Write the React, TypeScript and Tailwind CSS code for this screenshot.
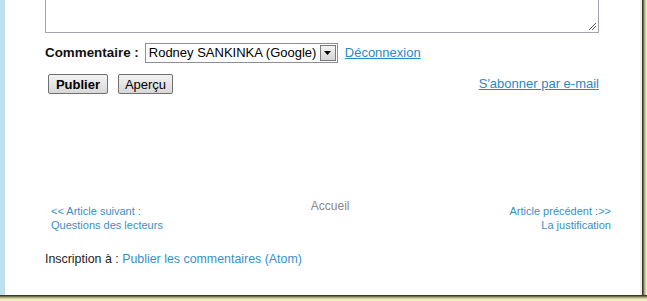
import React from "react";

export default function App() {
  const font = { fontFamily: '"Liberation Sans", Arial, sans-serif' };
  return (
    <div className="w-[647px] h-[301px] overflow-hidden flex flex-col bg-white" style={font}>
      <div className="flex flex-1 min-h-0">
        <div className="w-[5px] bg-[#bde0ec]" />
        <div className="flex-1 bg-white flex flex-col pl-[40px]">
          {/* textarea bottom */}
          <div className="relative w-[554px] h-[33px] border-x border-b border-[#a4a4ac] bg-white">
            <svg className="absolute right-[1px] bottom-[1px]" width="10" height="10" viewBox="0 0 10 10">
              <g fill="#555">
                <rect x="8" y="2" width="1" height="1" />
                <rect x="7" y="3" width="1" height="1" />
                <rect x="6" y="4" width="1" height="1" />
                <rect x="5" y="5" width="1" height="1" />
                <rect x="4" y="6" width="1" height="1" />
                <rect x="3" y="7" width="1" height="1" />
                <rect x="2" y="8" width="1" height="1" />
                <rect x="8" y="5" width="1" height="1" />
                <rect x="7" y="6" width="1" height="1" />
                <rect x="6" y="7" width="1" height="1" />
                <rect x="5" y="8" width="1" height="1" />
              </g>
            </svg>
          </div>
          {/* Commentaire row */}
          <div className="flex items-center mt-[10px] h-[20px] text-[13px] text-[#111]">
            <span className="font-bold text-[13.4px]">Commentaire :</span>
            <div className="ml-[6px] flex items-center h-[20px] w-[193px] border border-[#8f8f98] bg-white">
              <span className="pl-[3px] flex-1 text-black whitespace-nowrap">Rodney SANKINKA (Google)</span>
              <div className="w-[16px] h-[16px] mr-[1px] border border-[#7a7a7a] bg-gradient-to-b from-[#f4f4f4] to-[#d4d4d4] flex items-center justify-center">
                <svg width="7" height="4" viewBox="0 0 7 4"><path d="M0 0h7L3.5 4z" fill="#000" /></svg>
              </div>
            </div>
            <a className="ml-[7px] text-[#2a88c4] underline">Déconnexion</a>
          </div>
          {/* buttons row */}
          <div className="flex items-center mt-[11px] w-[554px] h-[20px] text-[13px]">
            <button className="ml-[3px] h-[20px] w-[60px] border border-[#707070] rounded-[2px] bg-gradient-to-b from-[#f2f2f2] to-[#d8d8d8] font-bold text-black leading-none">Publier</button>
            <button className="ml-[10px] h-[20px] w-[55px] border border-[#707070] rounded-[2px] bg-gradient-to-b from-[#f2f2f2] to-[#d8d8d8] text-black leading-none">Aperçu</button>
            <a className="ml-auto text-[#2a88c4] underline">S'abonner par e-mail</a>
          </div>
          {/* blog pager */}
          <div className="flex justify-between ml-[6px] w-[560px] mt-[110px] text-[11px] leading-[14px] text-[#3a8fc6]">
            <div className="flex flex-col">
              <span>&lt;&lt; Article suivant :</span>
              <span>Questions des lecteurs</span>
            </div>
            <div className="text-[#888] text-[12px] -mt-[5px] -ml-[12px]">Accueil</div>
            <div className="flex flex-col items-end">
              <span>Article précédent :&gt;&gt;</span>
              <span>La justification</span>
            </div>
          </div>
          <div className="mt-[18px] text-[12.4px] text-[#222]">
            Inscription à : <span className="text-[#3a8fc6]">Publier les commentaires (Atom)</span>
          </div>
        </div>
        <div className="w-[7px] flex">
          <div className="w-[2px] bg-[#f0f0e8]" />
          <div className="w-[1px] bg-[#3a3a2e]" />
          <div className="w-[1px] bg-[#6e6e50]" />
          <div className="w-[1px] bg-[#a8a878]" />
          <div className="w-[1px] bg-[#d4d4a0]" />
          <div className="w-[1px] bg-[#ececc4]" />
        </div>
      </div>
      <div className="h-[6px] flex flex-col">
        <div className="h-[1px] bg-[#3a3a2e]" />
        <div className="h-[1px] bg-[#6e6e50]" />
        <div className="h-[1px] bg-[#a8a878]" />
        <div className="h-[1px] bg-[#d4d4a0]" />
        <div className="h-[2px] bg-[#ececc4]" />
      </div>
    </div>
  );
}
